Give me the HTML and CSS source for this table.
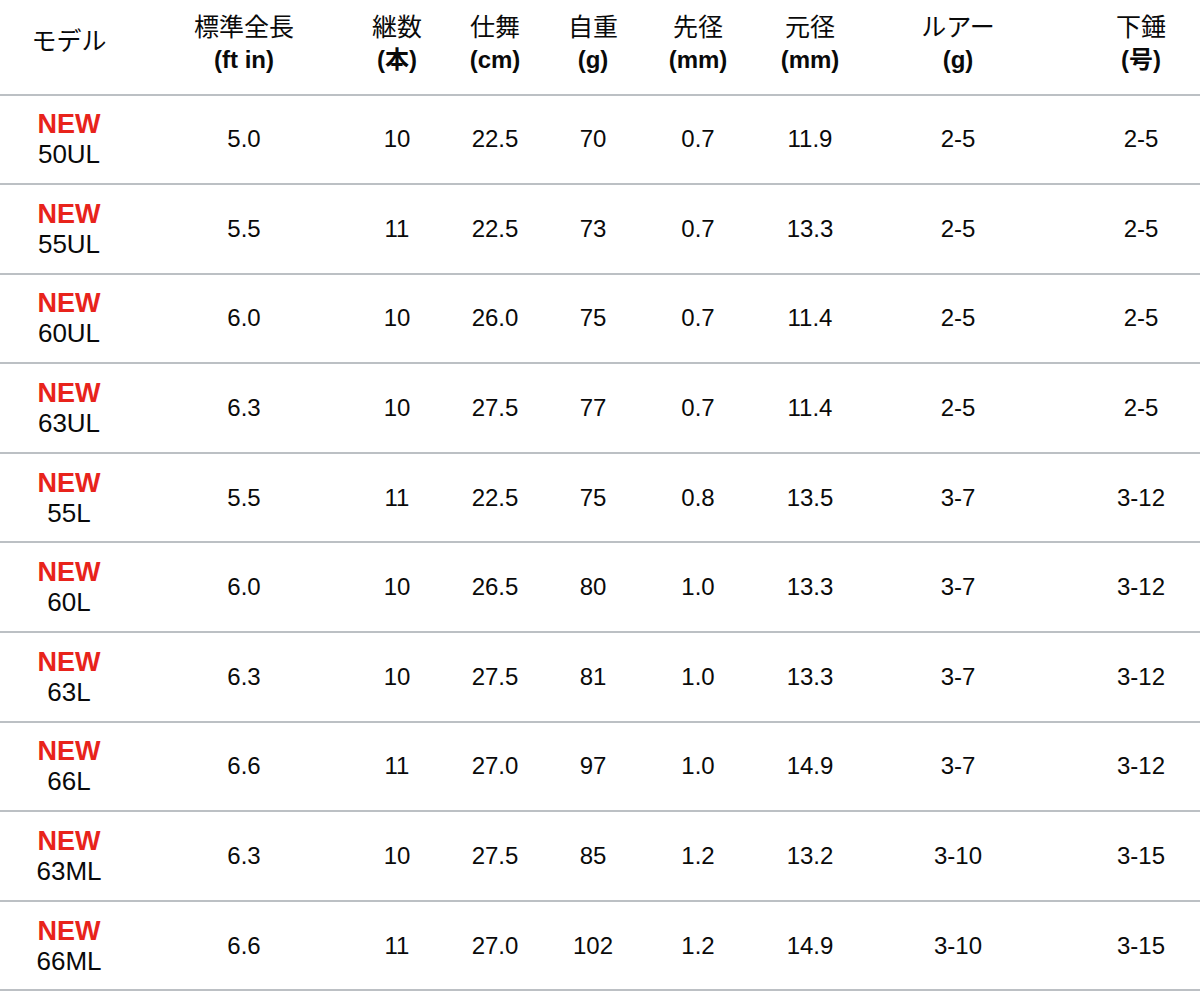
FILE: index.html
```html
<!DOCTYPE html>
<html lang="ja">
<head>
<meta charset="utf-8">
<link rel="stylesheet" href="styles.css">
</head>
<body>
<table class="spec">
  <colgroup>
    <col class="c-model"><col class="c-len"><col class="c-pcs"><col class="c-close"><col class="c-wt"><col class="c-tip"><col class="c-butt"><col class="c-lure"><col class="c-sinker">
  </colgroup>
  <thead>
    <tr>
      <th class="model-head">モデル</th>
      <th>標準全長<br><b>(ft in)</b></th>
      <th>継数<br><b>(本)</b></th>
      <th>仕舞<br><b>(cm)</b></th>
      <th>自重<br><b>(g)</b></th>
      <th>先径<br><b>(mm)</b></th>
      <th>元径<br><b>(mm)</b></th>
      <th class="lure">ルアー<br><b>(g)</b></th>
      <th>下錘<br><b>(号)</b></th>
    </tr>
  </thead>
  <tbody>
    <tr><td class="model"><span class="new">NEW</span><br>50UL</td><td>5.0</td><td>10</td><td>22.5</td><td>70</td><td>0.7</td><td>11.9</td><td class="lure">2-5</td><td>2-5</td></tr>
    <tr><td class="model"><span class="new">NEW</span><br>55UL</td><td>5.5</td><td>11</td><td>22.5</td><td>73</td><td>0.7</td><td>13.3</td><td class="lure">2-5</td><td>2-5</td></tr>
    <tr><td class="model"><span class="new">NEW</span><br>60UL</td><td>6.0</td><td>10</td><td>26.0</td><td>75</td><td>0.7</td><td>11.4</td><td class="lure">2-5</td><td>2-5</td></tr>
    <tr><td class="model"><span class="new">NEW</span><br>63UL</td><td>6.3</td><td>10</td><td>27.5</td><td>77</td><td>0.7</td><td>11.4</td><td class="lure">2-5</td><td>2-5</td></tr>
    <tr><td class="model"><span class="new">NEW</span><br>55L</td><td>5.5</td><td>11</td><td>22.5</td><td>75</td><td>0.8</td><td>13.5</td><td class="lure">3-7</td><td>3-12</td></tr>
    <tr><td class="model"><span class="new">NEW</span><br>60L</td><td>6.0</td><td>10</td><td>26.5</td><td>80</td><td>1.0</td><td>13.3</td><td class="lure">3-7</td><td>3-12</td></tr>
    <tr><td class="model"><span class="new">NEW</span><br>63L</td><td>6.3</td><td>10</td><td>27.5</td><td>81</td><td>1.0</td><td>13.3</td><td class="lure">3-7</td><td>3-12</td></tr>
    <tr><td class="model"><span class="new">NEW</span><br>66L</td><td>6.6</td><td>11</td><td>27.0</td><td>97</td><td>1.0</td><td>14.9</td><td class="lure">3-7</td><td>3-12</td></tr>
    <tr><td class="model"><span class="new">NEW</span><br>63ML</td><td>6.3</td><td>10</td><td>27.5</td><td>85</td><td>1.2</td><td>13.2</td><td class="lure">3-10</td><td>3-15</td></tr>
    <tr><td class="model"><span class="new">NEW</span><br>66ML</td><td>6.6</td><td>11</td><td>27.0</td><td>102</td><td>1.2</td><td>14.9</td><td class="lure">3-10</td><td>3-15</td></tr>
  </tbody>
</table>
</body>
</html>
```
FILE: styles.css
```css
html, body {
  margin: 0;
  padding: 0;
  background: #ffffff;
}
body {
  font-family: "Liberation Sans", "Noto Sans CJK JP", sans-serif;
  color: #0a0a0a;
}
.spec {
  width: 1200px;
  table-layout: fixed;
  border-collapse: separate;
  border-spacing: 0;
  font-size: 24px;
}
.c-model { width: 138px; }
.c-len { width: 212px; }
.c-pcs { width: 94px; }
.c-close { width: 102px; }
.c-wt { width: 94px; }
.c-tip { width: 116px; }
.c-butt { width: 108px; }
.c-lure { width: 218px; }
.c-sinker { width: 118px; }

.spec th,
.spec td {
  padding: 0;
  text-align: center;
  vertical-align: middle;
  border-bottom: 2px solid #bcc0c4;
  line-height: 32px;
}
.spec th {
  font-weight: normal;
  font-size: 25px;
  height: 87.5px;
  padding-bottom: 6px;
}
.spec th.model-head {
  height: 81.5px;
  padding-bottom: 12px;
}
.spec th b {
  font-weight: bold;
  font-size: 24px;
}
.spec td {
  height: 87.6px;
}
.spec .lure {
  padding-right: 30px;
}
.spec td.model {
  line-height: 30px;
  font-size: 26px;
}
.new {
  color: #e8231b;
  font-weight: bold;
  font-size: 27px;
}
```
